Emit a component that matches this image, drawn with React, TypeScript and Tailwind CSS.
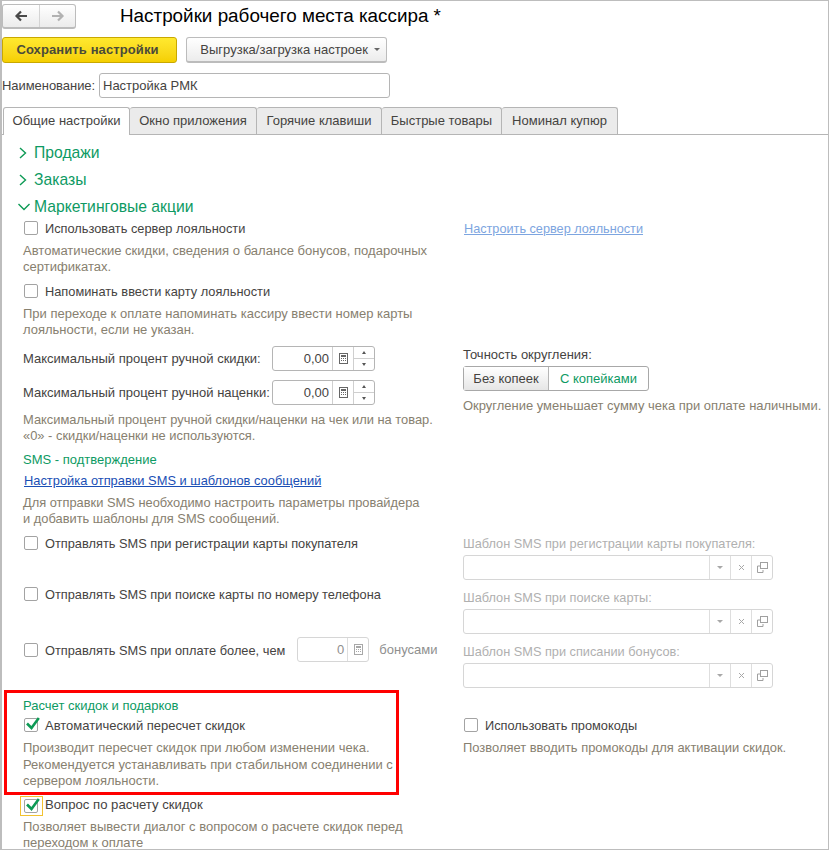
import React from 'react';

const Desc = ({ children, className = '' }: { children: React.ReactNode; className?: string }) => (
  <p className={`leading-4 text-[#87806f] whitespace-nowrap ${className || ''} `}>{children}</p>
);

const Check = ({ on = false, focus = false }: { on?: boolean; focus?: boolean }) => (
  <span className="relative shrink-0 w-[16px] h-[16px]">
    {focus && <span className="absolute -left-[3px] -top-[2px] w-[23px] h-[20px] border border-[#f2c230]" />}
    <span className="absolute left-px top-px w-[14px] h-[14px] rounded-[2px] border border-[#a3a3a3] bg-white" />
    {on && (
      <svg viewBox="0 0 16 16" className="absolute left-[1px] -top-[2px] w-[16px] h-[16px]">
        <path d="M3 8.5 L7.5 13 L14.8 3" fill="none" stroke="#0d9a55" strokeWidth="2.6" />
      </svg>
    )}
  </span>
);

const CheckRow = ({ label, on, focus, className = '', labelClass = 'pt-[2px] text-[12.8px]' }: { label: string; on?: boolean; focus?: boolean; className?: string; labelClass?: string }) => (
  <div className={`flex items-center gap-[6px] h-4 text-[#45433f] whitespace-nowrap ${className}`}>
    <Check on={on} focus={focus} />
    <span className={labelClass}>{label}</span>
  </div>
);

const Chevron = ({ open = false }: { open?: boolean }) => (
  <svg viewBox="0 0 12 12" className="w-3 h-3 shrink-0">
    <path d={open ? 'M0.5 3 L6 8.5 L11.5 3' : 'M2 1 L7.5 6 L2 11'} fill="none" stroke="#0d9a55" strokeWidth="1.4" />
  </svg>
);

const Section = ({ title, open }: { title: string; open?: boolean }) => (
  <div className="flex items-center gap-[4px] h-[27px] pl-[16px] text-[15.7px] text-[#0d9a63]">
    <Chevron open={open} />
    <span>{title}</span>
  </div>
);

const CalcIcon = ({ color = '#666' }: { color?: string }) => (
  <svg viewBox="0 0 9 11" className="w-[9px] h-[11px]">
    <rect x="0.5" y="0.5" width="8" height="10" fill="none" stroke={color} />
    <rect x="2" y="2" width="5" height="2" fill={color} />
    <path d="M2 5.5h1M4 5.5h1M6 5.5h1M2 7.5h1M4 7.5h1M6 7.5h1" stroke={color} />
  </svg>
);

const PercentInput = () => (
  <div className="flex h-[25px] w-[103px] rounded-[3px] border border-[#b5b5b5] bg-white">
    <span className="flex-1 text-right pr-[3px] text-[13px] leading-[23px] text-[#45433f]">0,00</span>
    <span className="w-[21px] border-l border-[#cfcfcf] flex items-center justify-center"><CalcIcon /></span>
    <span className="w-[21px] border-l border-[#cfcfcf] flex flex-col">
      <span className="h-[12px] border-b border-[#cfcfcf] flex items-center justify-center">
        <span className="w-0 h-0 border-x-[2px] border-x-transparent border-b-[3px] border-b-[#555]" />
      </span>
      <span className="flex-1 flex items-center justify-center">
        <span className="w-0 h-0 border-x-[2px] border-x-transparent border-t-[3px] border-t-[#555]" />
      </span>
    </span>
  </div>
);

const TemplateField = () => (
  <div className="flex h-[25px] w-[310px] rounded-[3px] border border-[#d6d6d6] bg-white">
    <span className="flex-1" />
    <span className="w-[21px] border-l border-[#dedede] flex items-center justify-center">
      <span className="w-0 h-0 border-x-[3px] border-x-transparent border-t-[3px] border-t-[#a8a8a8]" />
    </span>
    <span className="w-[21px] border-l border-[#dedede] flex items-center justify-center">
      <svg viewBox="0 0 7 7" className="w-[7px] h-[7px]"><path d="M1 1 L6 6 M6 1 L1 6" stroke="#a8a8a8" /></svg>
    </span>
    <span className="w-[21px] border-l border-[#dedede] flex items-center justify-center">
      <svg viewBox="0 0 11 11" className="w-[11px] h-[11px]">
        <rect x="3.5" y="0.5" width="7" height="6" fill="none" stroke="#a0a0a0" />
        <path d="M3 4H0.5V10.5H6V8" fill="none" stroke="#a0a0a0" />
      </svg>
    </span>
  </div>
);

export default function App() {
  return (
    <div className="relative w-[829px] h-[850px] overflow-hidden bg-white border-t border-b border-r border-l-2 border-[#bdbdbd] font-['Liberation_Sans',Arial,sans-serif]">
      {/* шапка */}
      <div className="flex items-center h-[26px] mt-[2px]">
        <div className="flex h-[25px] w-[74px] rounded-[3px] border border-[#bcbcbc] border-b-2 bg-gradient-to-b from-white to-[#ececec]">
          <span className="w-[37px] border-r border-[#d4d4d4] flex items-center justify-center">
            <svg viewBox="0 0 14 12" className="w-[14px] h-[12px]"><path d="M13 6H3M7 1.5 L2.5 6 L7 10.5" fill="none" stroke="#4a4a4a" strokeWidth="2.2" /></svg>
          </span>
          <span className="flex-1 flex items-center justify-center">
            <svg viewBox="0 0 14 12" className="w-[14px] h-[12px]"><path d="M1 6H11M7 1.5 L11.5 6 L7 10.5" fill="none" stroke="#b2b2b2" strokeWidth="2.2" /></svg>
          </span>
        </div>
        <h1 className="ml-[44px] text-[18.85px] leading-[26px] text-black whitespace-nowrap">Настройки рабочего места кассира *</h1>
      </div>

      {/* кнопки */}
      <div className="flex mt-[8px] h-[26px]">
        <button className="w-[175px] h-[26px] pr-[4px] rounded-[3px] border border-[#c9a800] bg-gradient-to-b from-[#ffe92e] to-[#f5cf00] text-[13px] font-bold tracking-[0.1px] text-[#4a4a3a]">Сохранить настройки</button>
        <button className="ml-[9px] w-[201px] h-[26px] rounded-[3px] border border-[#bcbcbc] border-b-2 bg-gradient-to-b from-white to-[#ececec] text-[13px] text-[#45433f] flex items-center justify-end pr-[6px] gap-[6px]">
          <span>Выгрузка/загрузка настроек</span>
          <span className="w-0 h-0 border-x-[3px] border-x-transparent border-t-[3px] border-t-[#666]" />
        </button>
      </div>

      {/* наименование */}
      <div className="flex items-center mt-[10px] h-[25px] text-[13px] text-[#45433f]">
        <span className="w-[97px] whitespace-nowrap tracking-[-0.05px]">Наименование:</span>
        <div className="w-[291px] h-[25px] rounded-[3px] border border-[#b5b5b5] pl-[3px] leading-[23px]">Настройка РМК</div>
      </div>

      {/* вкладки */}
      <div className="flex mt-[9px] h-[28px] border-b border-[#b5b5b5] pl-[1px] text-[13px] text-[#45433f] whitespace-nowrap">
        <div className="h-[28px] w-[127px] text-center leading-[25px] bg-white rounded-t-[3px] border border-b-0 border-[#b5b5b5]">Общие настройки</div>
        <div className="h-[27px] w-[127px] text-center leading-[25px] bg-[#ebebeb] rounded-t-[3px] border border-l-0 border-b-0 border-[#b5b5b5]">Окно приложения</div>
        <div className="h-[27px] w-[125px] text-center leading-[25px] bg-[#ebebeb] rounded-t-[3px] border border-l-0 border-b-0 border-[#b5b5b5]">Горячие клавиши</div>
        <div className="h-[27px] w-[120px] text-center leading-[25px] bg-[#ebebeb] rounded-t-[3px] border border-l-0 border-b-0 border-[#b5b5b5]">Быстрые товары</div>
        <div className="h-[27px] w-[116px] text-center leading-[25px] bg-[#ebebeb] rounded-t-[3px] border border-l-0 border-b-0 border-[#b5b5b5]">Номинал купюр</div>
      </div>

      <div className="pt-[4px]">
        <Section title="Продажи" />
        <Section title="Заказы" />
        <Section title="Маркетинговые акции" open />
      </div>

      <div className="flex">
        {/* левая колонка */}
        <div className="w-[439px] pl-[21px] shrink-0">
          <CheckRow label="Использовать сервер лояльности" />
          <Desc className="mt-[7px] text-[13.06px]">Автоматические скидки, сведения о балансе бонусов, подарочных<br />сертификатах.</Desc>
          <CheckRow label="Напоминать ввести карту лояльности" className="mt-[8px]" />
          <Desc className="mt-[7px] text-[13px]">При переходе к оплате напоминать кассиру ввести номер карты<br />лояльности, если не указан.</Desc>
          <div className="flex items-center justify-between w-[352px] mt-[8px] text-[13px] text-[#45433f]">
            <span>Максимальный процент ручной скидки:</span>
            <PercentInput />
          </div>
          <div className="flex items-center justify-between w-[352px] mt-[9px] text-[13px] text-[#45433f]">
            <span>Максимальный процент ручной наценки:</span>
            <PercentInput />
          </div>
          <Desc className="mt-[7px] text-[12.9px]">Максимальный процент ручной скидки/наценки на чек или на товар.<br />«0» - скидки/наценки не используются.</Desc>
          <div className="mt-[8px] text-[13px] leading-4 text-[#0d9a63]">SMS - подтверждение</div>
          <a className="block mt-[5px] pl-px text-[12.87px] leading-4 text-[#1a4fb5] underline">Настройка отправки SMS и шаблонов сообщений</a>
          <Desc className="mt-[6px] text-[12.87px]">Для отправки SMS необходимо настроить параметры провайдера<br />и добавить шаблоны для SMS сообщений.</Desc>
          <CheckRow label="Отправлять SMS при регистрации карты покупателя" className="mt-[8px]" />
          <CheckRow label="Отправлять SMS при поиске карты по номеру телефона" className="mt-[35px]" />
          <div className="flex items-center mt-[35px] h-[25px] text-[13px] text-[#45433f] whitespace-nowrap">
            <CheckRow label="Отправлять SMS при оплате более, чем" />
            <div className="ml-[12px] flex w-[72px] h-[25px] rounded-[3px] border border-[#d6d6d6]">
              <span className="flex-1 text-right pr-[3px] leading-[23px] text-[#8f8f8f]">0</span>
              <span className="w-[21px] border-l border-[#dedede] flex items-center justify-center"><CalcIcon color="#a8a8a8" /></span>
            </div>
            <span className="ml-[10px] text-[#8f8f8f]">бонусами</span>
          </div>
          <div className="mt-[36px] text-[13px] leading-4 text-[#0d9a63]">Расчет скидок и подарков</div>
          <CheckRow label="Автоматический пересчет скидок" on labelClass="pt-[2px] text-[13px]" className="mt-[3px]" />
          <Desc className="mt-[7px] text-[13px] !leading-[16.5px]">Производит пересчет скидок при любом изменении чека.<br />Рекомендуется устанавливать при стабильном соединении с<br />сервером лояльности.</Desc>
          <CheckRow label="Вопрос по расчету скидок" on focus labelClass="pb-[2px] text-[13.15px]" className="mt-[8px]" />
          <Desc className="mt-[5px] text-[13px]">Позволяет вывести диалог с вопросом о расчете скидок перед<br />переходом к оплате</Desc>
        </div>

        {/* правая колонка */}
        <div className="flex-1 pl-[22px]">
          <a className="block pt-px pl-px text-[12.7px] leading-4 text-[#7da5e0] underline">Настроить сервер лояльности</a>
          <div className="mt-[110px] text-[13px] leading-4 text-[#45433f]">Точность округления:</div>
          <div className="flex mt-[3px] w-[186px] h-[25px] rounded-[3px] border border-[#a8a8a8] text-[13px] leading-[23px] text-center">
            <span className="w-[85px] border-r border-[#b5b5b5] bg-gradient-to-b from-white to-[#e6e6e6] text-[#45433f]">Без копеек</span>
            <span className="flex-1 text-[#0d9a63]">С копейками</span>
          </div>
          <Desc className="mt-[7px] text-[12.97px]">Округление уменьшает сумму чека при оплате наличными.</Desc>
          <div className="mt-[122px] text-[12.75px] leading-4 text-[#b0b0b0]">Шаблон SMS при регистрации карты покупателя:</div>
          <div className="mt-[3px]"><TemplateField /></div>
          <div className="mt-[10px] text-[12.75px] leading-4 text-[#b0b0b0]">Шаблон SMS при поиске карты:</div>
          <div className="mt-[3px]"><TemplateField /></div>
          <div className="mt-[10px] text-[12.75px] leading-4 text-[#b0b0b0]">Шаблон SMS при списании бонусов:</div>
          <div className="mt-[3px]"><TemplateField /></div>
          <CheckRow label="Использовать промокоды" className="mt-[29px]" />
          <Desc className="mt-[7px] text-[12.93px]">Позволяет вводить промокоды для активации скидок.</Desc>
        </div>
      </div>

      {/* красная рамка выделения */}
      <div className="absolute left-[2px] top-[689px] w-[395px] h-[105px] border-[3px] border-[#ff0000] pointer-events-none" />
    </div>
  );
}
